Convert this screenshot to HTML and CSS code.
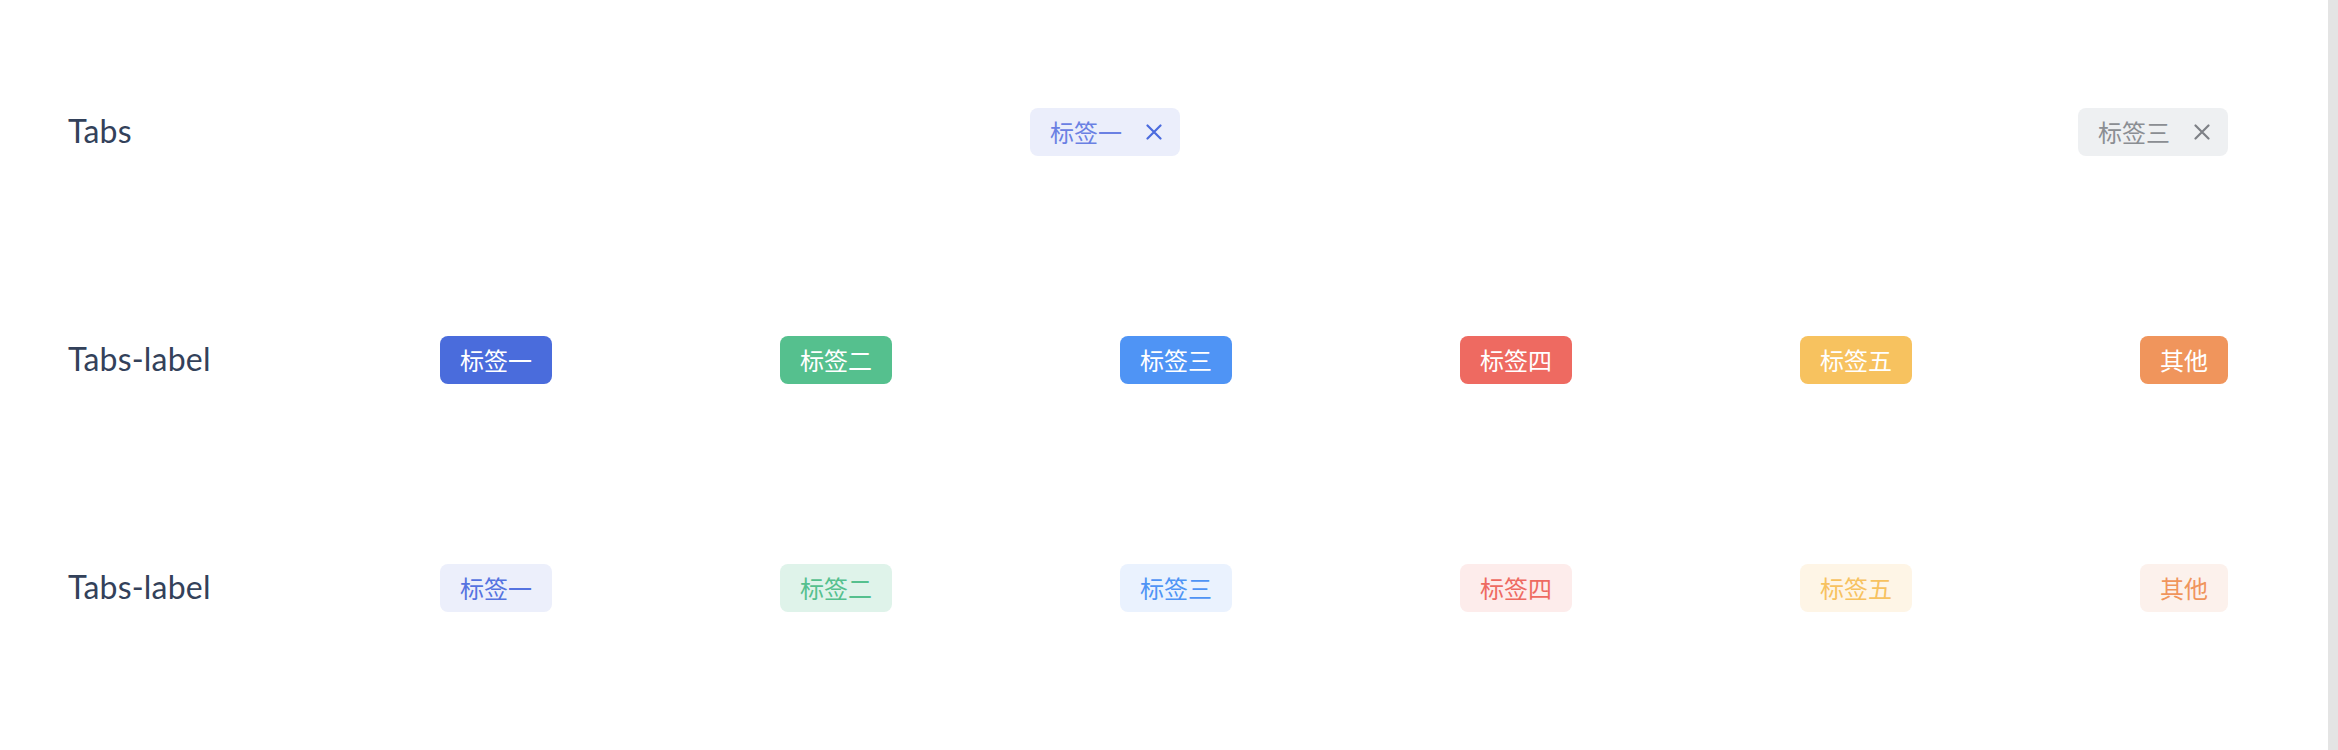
FILE: index.html
```html
<!DOCTYPE html>
<html lang="zh">
<head>
<meta charset="utf-8">
<title>Tabs</title>
<link rel="stylesheet" href="styles.css">
</head>
<body>
<div class="page">
  <main class="main">
    <section class="row">
      <div class="label">Tabs</div>
      <div class="items items-tabs">
        <span class="tab tab-active">标签一<svg class="close" viewBox="0 0 16 16" width="16" height="16"><path d="M1.5 1.5L14.5 14.5M14.5 1.5L1.5 14.5" stroke="currentColor" stroke-width="2.2" stroke-linecap="round"/></svg></span>
        <span class="tab tab-muted tab-push">标签三<svg class="close" viewBox="0 0 16 16" width="16" height="16"><path d="M1.5 1.5L14.5 14.5M14.5 1.5L1.5 14.5" stroke="currentColor" stroke-width="2.2" stroke-linecap="round"/></svg></span>
      </div>
    </section>
    <section class="row">
      <div class="label">Tabs-label</div>
      <div class="items">
        <span class="chip solid c-blue">标签一</span>
        <span class="chip solid c-green">标签二</span>
        <span class="chip solid c-sky">标签三</span>
        <span class="chip solid c-red">标签四</span>
        <span class="chip solid c-yellow">标签五</span>
        <span class="chip solid c-orange">其他</span>
      </div>
    </section>
    <section class="row">
      <div class="label">Tabs-label</div>
      <div class="items">
        <span class="chip light c-blue">标签一</span>
        <span class="chip light c-green">标签二</span>
        <span class="chip light c-sky">标签三</span>
        <span class="chip light c-red">标签四</span>
        <span class="chip light c-yellow">标签五</span>
        <span class="chip light c-orange">其他</span>
      </div>
    </section>
  </main>
  <aside class="scrollbar"></aside>
</div>
</body>
</html>
```
FILE: styles.css
```css
html, body {
  margin: 0;
  padding: 0;
  background: #ffffff;
}
.page {
  display: flex;
  width: 100%;
  height: 750px;
  overflow: hidden;
}
.main {
  flex: 1;
  padding: 108px 100px 0 68px;
  display: flex;
  flex-direction: column;
  gap: 180px;
}
.scrollbar {
  width: 10px;
  flex: none;
  background: #e4e4e4;
}
.row {
  display: grid;
  grid-template-columns: 372px 1fr;
  align-items: center;
  height: 48px;
}
.label {
  font-family: Lato, "Noto Sans", sans-serif;
  font-size: 32px;
  letter-spacing: 0.2px;
  color: #33415a;
  line-height: 46px;
  padding-bottom: 2px;
}
.items {
  display: flex;
  justify-content: space-between;
  align-items: center;
}
.items-tabs {
  justify-content: flex-start;
}
.chip, .tab {
  font-family: "Noto Sans CJK SC", "Noto Sans", sans-serif;
  font-size: 24px;
  height: 48px;
  line-height: 48px;
  border-radius: 8px;
  box-sizing: border-box;
  white-space: nowrap;
}
.chip {
  padding: 0 20px;
}
.tab {
  display: inline-flex;
  align-items: center;
  gap: 24px;
  padding: 0 18px 0 20px;
  margin-left: 590px;
}
.tab-push {
  margin-left: auto;
}
.close {
  display: block;
  flex: none;
}
.tab-active {
  background: #ebeefb;
  color: #6a80e3;
}
.tab-active .close { color: #4b6bde; }
.tab-muted {
  background: #eef0f2;
  color: #8b8e93;
}
.tab-muted .close { color: #7e8187; }

.solid { color: #ffffff; }
.solid.c-blue { background: #4a6cdc; }
.solid.c-green { background: #55c08e; }
.solid.c-sky { background: #4f94f5; }
.solid.c-red { background: #ee6a61; }
.solid.c-yellow { background: #f7c25f; }
.solid.c-orange { background: #f0955c; }

.light.c-blue { background: #eceffb; color: #5573e0; }
.light.c-green { background: #dff3ea; color: #55c08e; }
.light.c-sky { background: #eaf2fe; color: #4f94f5; }
.light.c-red { background: #fdeceb; color: #ee6a61; }
.light.c-yellow { background: #fef5e6; color: #f7c25f; }
.light.c-orange { background: #fcf1ec; color: #f0955c; }
```
